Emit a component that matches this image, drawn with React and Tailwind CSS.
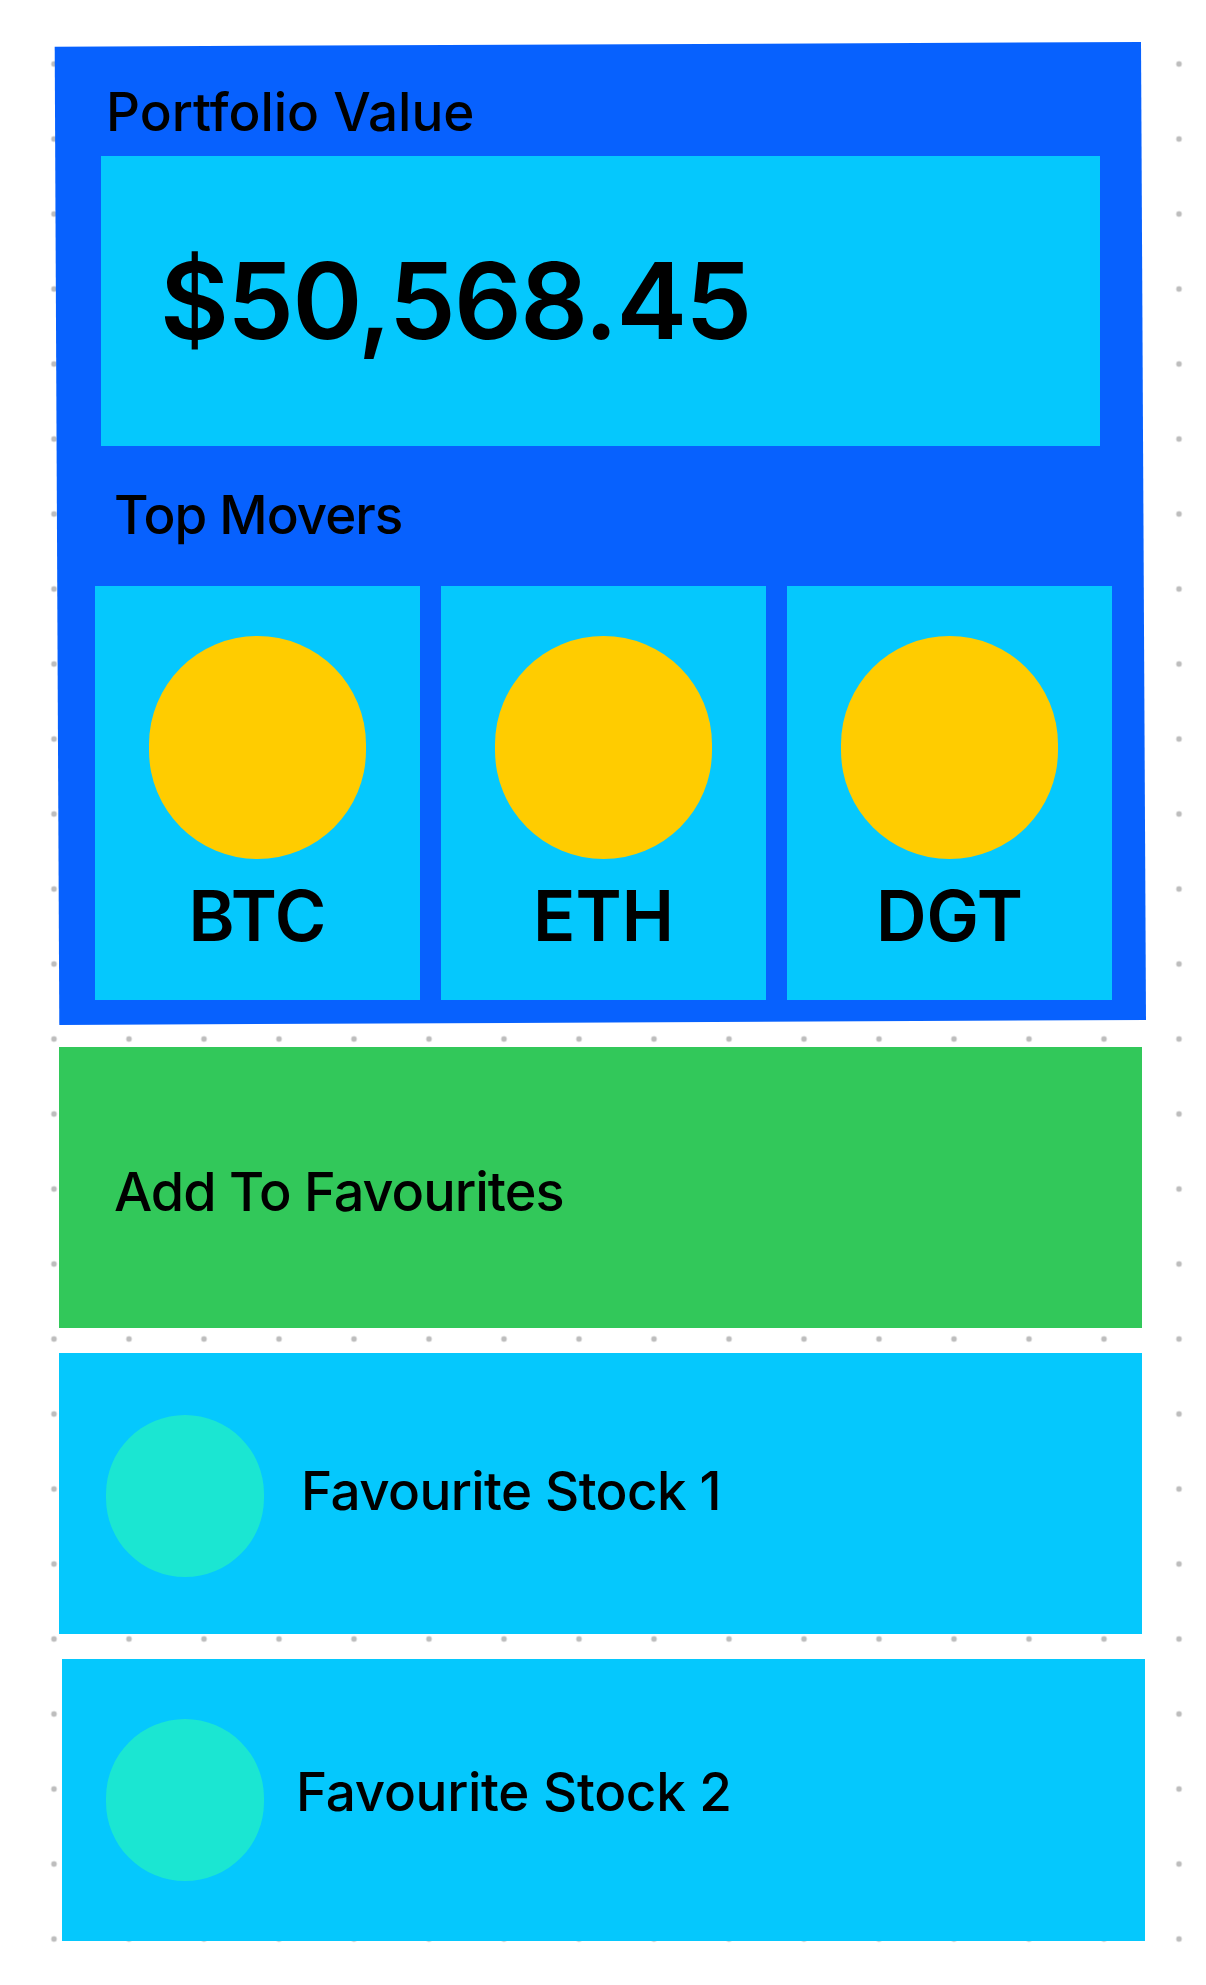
const movers = ["BTC", "ETH", "DGT"];

const Label = ({ children, className = "" }) => (
  <div className={`text-[53px] leading-none font-medium text-black ${className}`}>
    {children}
  </div>
);

const FavouriteRow = ({ name, className, circleClass, textClass }) => (
  <div className={`flex items-center w-[1083px] h-[281px] bg-[#05c8fd] ${className}`}>
    <div className={`w-[158px] h-[162px] rounded-full bg-[#1be6d2] shrink-0 ${circleClass}`} />
    <Label className={textClass}>{name}</Label>
  </div>
);

export default function App() {
  return (
    <div
      className="min-h-[1985px] w-full bg-white bg-[radial-gradient(circle,#bdbdbd_2.6px,transparent_3.2px)] bg-[length:75px_75px] bg-[position:16.5px_26.5px] font-['Inter','Liberation_Sans',sans-serif]"
    >
      <div className="flex flex-col pt-[42px] pl-[54px]">
        {/* portfolio panel */}
        <div className="w-[1092px] h-[983px] bg-[#0761fe] [clip-path:polygon(0.7px_4.7px,1087px_0,1092px_978px,5.3px_983px)] flex flex-col">
          <Label className="mt-[44px] pl-[52px]">Portfolio Value</Label>

          <div className="mt-[17px] ml-[47px] w-[999px] h-[290px] bg-[#05c8fd] flex items-center pl-[59px]">
            <span className="text-[106px] leading-none font-semibold tracking-[-1.6px] text-black">
              $50,568.45
            </span>
          </div>

          <Label className="mt-[43px] pl-[60px] tracking-[-1px]">Top Movers</Label>

          <div className="mt-[44px] ml-[41px] flex gap-[21px]">
            {movers.map((coin) => (
              <div
                key={coin}
                className="w-[325px] h-[414px] bg-[#05c8fd] flex flex-col items-center pt-[50px]"
              >
                <div className="w-[217px] h-[223px] rounded-full bg-[#ffcc00]" />
                <div className="mt-[22px] text-[70px] leading-none font-semibold text-black">
                  {coin}
                </div>
              </div>
            ))}
          </div>
        </div>

        <button
          type="button"
          className="mt-[22px] ml-[5px] w-[1083px] h-[281px] bg-[#32c85a] flex items-center pl-[55px] pt-[8px] text-left"
        >
          <span className="text-[54px] leading-none font-medium tracking-[-1px] text-black">
            Add To Favourites
          </span>
        </button>

        <FavouriteRow
          name="Favourite Stock 1"
          className="mt-[25px] ml-[5px] pl-[47px]"
          circleClass="mt-[5px]"
          textClass="ml-[37px] mb-[5px] tracking-[-0.6px]"
        />
        <FavouriteRow
          name="Favourite Stock 2"
          className="mt-[25px] ml-[8px] pl-[44px] h-[282px]"
          circleClass=""
          textClass="ml-[32px] mb-[16px] tracking-[-0.3px]"
        />
      </div>
    </div>
  );
}
